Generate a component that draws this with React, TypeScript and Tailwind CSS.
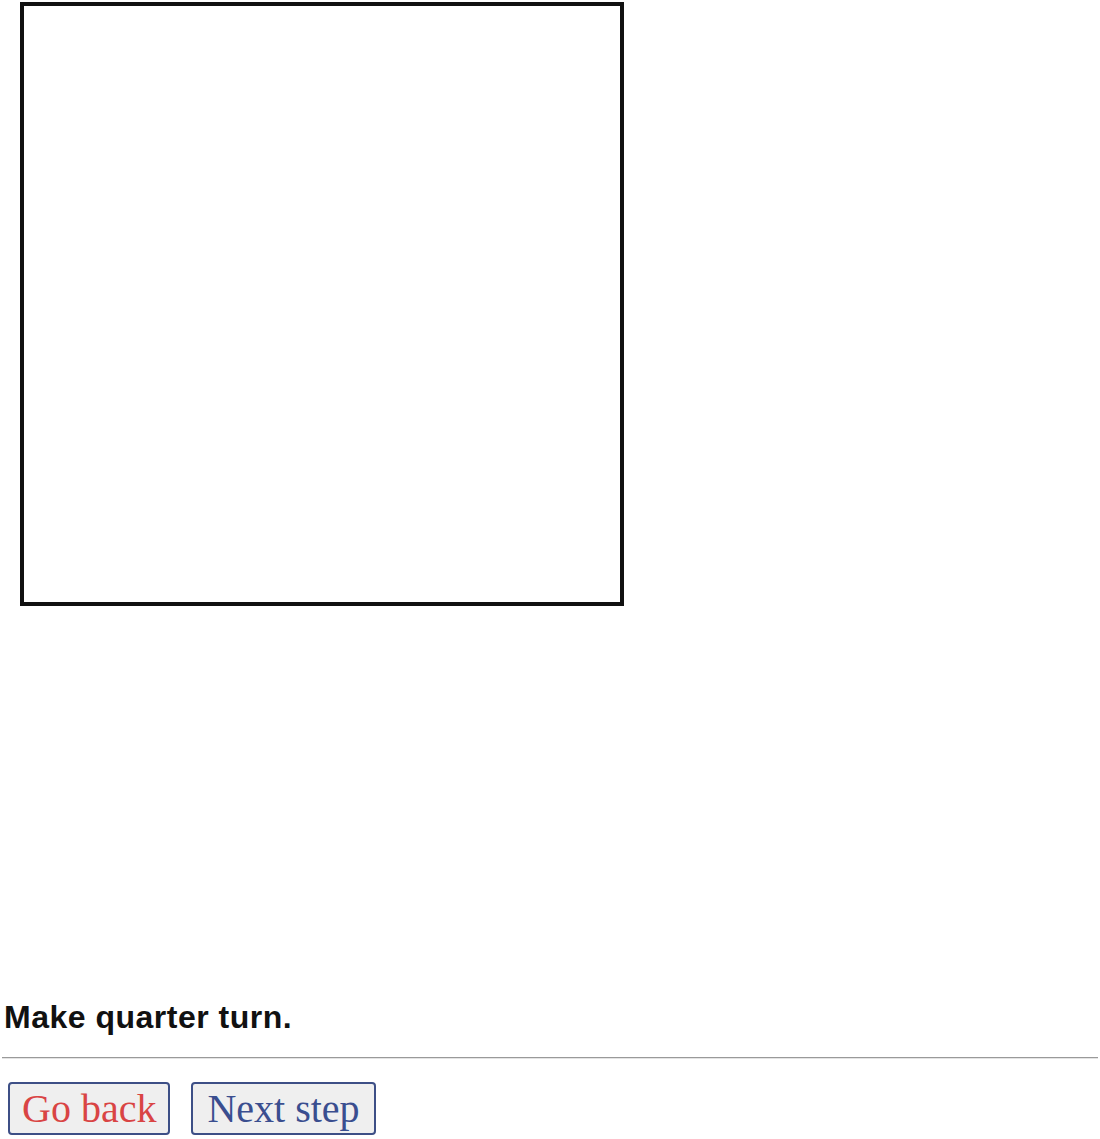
export default function App() {
  return (
    <div className="w-[1100px] h-[1139px] bg-white overflow-hidden">
      <div className="pt-[2px] pl-[20px]">
        <div className="w-[604px] h-[604px] border-[4px] border-[#111]" />
      </div>
      <div className="mt-[393px] pl-[4px] h-[36px] leading-[36px] text-[32px] font-bold text-[#111] tracking-[0.5px]" style={{ fontFamily: '"Liberation Sans", sans-serif' }}>
        Make quarter turn.
      </div>
      <div className="mt-[22px] mx-[2px] h-[2px] border-t border-t-[#9a9a9a] border-b border-b-[#e4e4e4]" />
      <div className="mt-[23px] pl-[8px] flex gap-[21px]">
        <button className="h-[53px] px-[12px] rounded-[4px] border-2 border-[#3d4f86] bg-[#efefef] text-[40px] leading-[49px] text-[#d94444]" style={{ fontFamily: '"Liberation Serif", serif' }}>
          Go back
        </button>
        <button className="h-[53px] px-[14px] rounded-[4px] border-2 border-[#3d4f86] bg-[#efefef] text-[40px] leading-[49px] text-[#3a4e8f]" style={{ fontFamily: '"Liberation Serif", serif' }}>
          Next step
        </button>
      </div>
    </div>
  );
}
